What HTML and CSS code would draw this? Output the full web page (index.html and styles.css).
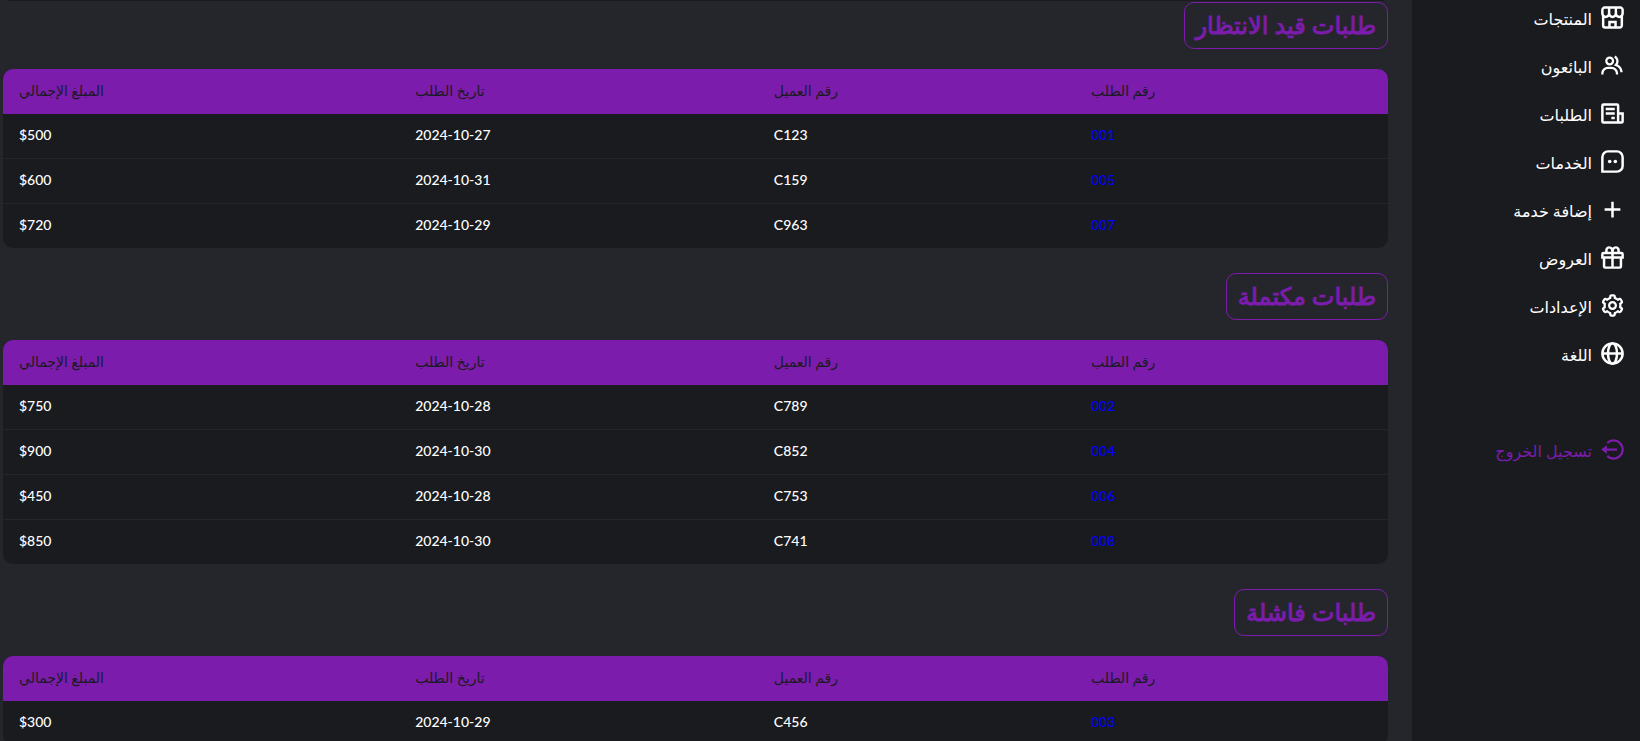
FILE: index.html
```html
<!DOCTYPE html>
<html lang="ar" dir="rtl">
<head>
<meta charset="utf-8">
<title>الطلبات</title>
<link rel="stylesheet" href="styles.css">
</head>
<body>
<div class="app">
  <nav class="sidebar">
    <a class="nav-link" href="#"><svg class="icon line" viewBox="0 0 24 24"><path d="M5 3.200h14a2 2 0 0 1 2 2v3.300a3 3 0 0 1-6 0 3 3 0 0 1-6 0 3 3 0 0 1-6 0V5.200a2 2 0 0 1 2-2zM9 3.500V9M15 3.500V9M3.700 10.500V19a1.800 1.800 0 0 0 1.800 1.800h13a1.800 1.800 0 0 0 1.800-1.800v-8.500M9.300 20.500V16h5.400v4.500"/></svg><span>المنتجات</span></a>
    <a class="nav-link" href="#"><svg class="icon" viewBox="0 0 24 24"><path d="M16.604 11.048a5.67 5.67 0 0 0 .751-3.44c-.179-1.784-1.175-3.361-2.803-4.44l-1.105 1.666c1.119.742 1.8 1.799 1.918 2.974a3.693 3.693 0 0 1-1.072 2.986l-1.192 1.192 1.618.475C18.951 13.701 19 17.957 19 18h2c0-1.789-.956-5.285-4.396-6.952z"/><path d="M9.500 12c2.206 0 4-1.794 4-4s-1.794-4-4-4-4 1.794-4 4 1.794 4 4 4zm0-6c1.103 0 2 .897 2 2s-.897 2-2 2-2-.897-2-2 .897-2 2-2zm1.500 7H8c-3.309 0-6 2.691-6 6v1h2v-1c0-2.206 1.794-4 4-4h3c2.206 0 4 1.794 4 4v1h2v-1c0-3.309-2.691-6-6-6z"/></svg><span>البائعون</span></a>
    <a class="nav-link" href="#"><svg class="icon line" viewBox="0 0 24 24"><path d="M17 20V5a1 1 0 0 0-1-1H4a1 1 0 0 0-1 1v14a1 1 0 0 0 1 1h16a1 1 0 0 0 1-1v-7h-4M6 8h8M6 12h8M11 16h3"/></svg><span>الطلبات</span></a>
    <a class="nav-link" href="#"><svg class="icon line" viewBox="0 0 24 24"><path d="M3 21V8a5 5 0 0 1 5-5h8a5 5 0 0 1 5 5v8a5 5 0 0 1-5 5z"/><circle class="dot" cx="9.500" cy="12" r="1.600"/><circle class="dot" cx="14.500" cy="12" r="1.600"/></svg><span>الخدمات</span></a>
    <a class="nav-link" href="#"><svg class="icon line" viewBox="0 0 24 24"><path d="M12 5v14M5 12h14"/></svg><span>إضافة خدمة</span></a>
    <a class="nav-link" href="#"><svg class="icon line" viewBox="0 0 24 24"><path d="M4 8h16a1 1 0 0 1 1 1v3H3V9a1 1 0 0 1 1-1zM4.500 12v8a1 1 0 0 0 1 1h13a1 1 0 0 0 1-1v-8M12 8v13M12 7.500C12 4.500 11 3 9 3S6.200 5 6.700 7.500M12 7.500c0-3 1-4.500 3-4.500s2.800 2 2.300 4.500"/></svg><span>العروض</span></a>
    <a class="nav-link" href="#"><svg class="icon" viewBox="0 0 24 24"><path d="M12 16c2.206 0 4-1.794 4-4s-1.794-4-4-4-4 1.794-4 4 1.794 4 4 4zm0-6c1.084 0 2 .916 2 2s-.916 2-2 2-2-.916-2-2 .916-2 2-2z"/><path d="m2.845 16.136 1 1.730c.531.917 1.809 1.261 2.730.730l.529-.306A8.100 8.100 0 0 0 9 19.402V20c0 1.103.897 2 2 2h2c1.103 0 2-.897 2-2v-.598a8.132 8.132 0 0 0 1.896-1.111l.529.306c.923.530 2.198.188 2.731-.731l.999-1.729a2.001 2.001 0 0 0-.731-2.732l-.505-.292a7.718 7.718 0 0 0 0-2.224l.505-.292a2.002 2.002 0 0 0 .731-2.732l-.999-1.729c-.531-.920-1.808-1.265-2.731-.732l-.529.306A8.100 8.100 0 0 0 15 4.598V4c0-1.103-.897-2-2-2h-2c-1.103 0-2 .897-2 2v.598a8.132 8.132 0 0 0-1.896 1.111l-.529-.306c-.924-.531-2.200-.187-2.731.732l-.999 1.729a2.001 2.001 0 0 0 .731 2.732l.505.292a7.683 7.683 0 0 0 0 2.223l-.505.292a2.003 2.003 0 0 0-.731 2.733zm3.326-2.758A5.703 5.703 0 0 1 6 12c0-.462.058-.926.170-1.378a.999.999 0 0 0-.470-1.108l-1.123-.650.998-1.729 1.145.662a.997.997 0 0 0 1.188-.142 6.071 6.071 0 0 1 2.384-1.399A1 1 0 0 0 11 5.300V4h2v1.300a1 1 0 0 0 .708.956 6.083 6.083 0 0 1 2.384 1.399.999.999 0 0 0 1.188.142l1.144-.661 1 1.729-1.124.649a1 1 0 0 0-.470 1.108c.112.452.170.916.170 1.378 0 .461-.058.925-.171 1.378a1 1 0 0 0 .471 1.108l1.123.649-.998 1.729-1.145-.661a.996.996 0 0 0-1.188.142 6.071 6.071 0 0 1-2.384 1.399A1 1 0 0 0 13 18.700l.002 1.300H11v-1.300a1 1 0 0 0-.708-.956 6.083 6.083 0 0 1-2.384-1.399.992.992 0 0 0-1.188-.141l-1.144.662-1-1.729 1.124-.651a1 1 0 0 0 .471-1.108z"/></svg><span>الإعدادات</span></a>
    <a class="nav-link" href="#"><svg class="icon line" viewBox="0 0 24 24"><circle cx="12" cy="12" r="9"/><ellipse cx="12" cy="12" rx="4" ry="9"/><path d="M3 12h18"/></svg><span>اللغة</span></a>
    <a class="nav-link logout" href="#"><svg class="icon" viewBox="0 0 24 24"><path d="m2 12 5 4v-3h9v-2H7V8z"/><path d="M13.001 2.999a8.938 8.938 0 0 0-6.364 2.637L8.051 7.050c1.322-1.322 3.080-2.051 4.950-2.051s3.628.729 4.950 2.051 2.051 3.080 2.051 4.950-.729 3.628-2.051 4.950-3.080 2.051-4.950 2.051-3.628-.729-4.950-2.051l-1.414 1.414c1.699 1.700 3.959 2.637 6.364 2.637s4.665-.937 6.364-2.637c1.700-1.699 2.637-3.959 2.637-6.364s-.937-4.665-2.637-6.364a8.938 8.938 0 0 0-6.364-2.637z"/></svg><span>تسجيل الخروج</span></a>
  </nav>
  <main class="content">
    <div class="divider"></div>
    <section class="orders">
      <h2 class="title">طلبات قيد الانتظار</h2>
      <table class="table">
        <thead><tr><th class="col-id">رقم الطلب</th><th class="col-client">رقم العميل</th><th class="col-date">تاريخ الطلب</th><th class="col-total">المبلغ الإجمالي</th></tr></thead>
        <tbody>
          <tr><td><a href="#">001</a></td><td>C123</td><td>2024-10-27</td><td>$500</td></tr>
          <tr><td><a href="#">005</a></td><td>C159</td><td>2024-10-31</td><td>$600</td></tr>
          <tr><td><a href="#">007</a></td><td>C963</td><td>2024-10-29</td><td>$720</td></tr>
        </tbody>
      </table>
    </section>
    <section class="orders">
      <h2 class="title">طلبات مكتملة</h2>
      <table class="table">
        <thead><tr><th class="col-id">رقم الطلب</th><th class="col-client">رقم العميل</th><th class="col-date">تاريخ الطلب</th><th class="col-total">المبلغ الإجمالي</th></tr></thead>
        <tbody>
          <tr><td><a href="#">002</a></td><td>C789</td><td>2024-10-28</td><td>$750</td></tr>
          <tr><td><a href="#">004</a></td><td>C852</td><td>2024-10-30</td><td>$900</td></tr>
          <tr><td><a href="#">006</a></td><td>C753</td><td>2024-10-28</td><td>$450</td></tr>
          <tr><td><a href="#">008</a></td><td>C741</td><td>2024-10-30</td><td>$850</td></tr>
        </tbody>
      </table>
    </section>
    <section class="orders">
      <h2 class="title">طلبات فاشلة</h2>
      <table class="table">
        <thead><tr><th class="col-id">رقم الطلب</th><th class="col-client">رقم العميل</th><th class="col-date">تاريخ الطلب</th><th class="col-total">المبلغ الإجمالي</th></tr></thead>
        <tbody>
          <tr><td><a href="#">003</a></td><td>C456</td><td>2024-10-29</td><td>$300</td></tr>
        </tbody>
      </table>
    </section>
  </main>
</div>
</body>
</html>
```
FILE: styles.css
```css
:root {
  --purple: #7b1cac;
  --dark: #191b1f;
  --page: #25262b;
}

* { box-sizing: border-box; }

body {
  margin: 0;
  background: var(--page);
  color: #fff;
  font-family: Lato, "DejaVu Sans", sans-serif;
  font-size: 14px;
}

.app {
  display: flex;
  height: 100vh;
  overflow: hidden;
}

.sidebar {
  flex: 0 0 228px;
  display: flex;
  flex-direction: column;
  gap: 16px;
  padding: 1px 14px;
  background: var(--dark);
}

.nav-link {
  display: flex;
  align-items: center;
  gap: 7px;
  height: 32px;
  color: #fff;
  font-size: 16px;
  line-height: 28px;
  text-decoration: none;
}

.nav-link span { padding-top: 4px; }

.logout {
  margin-top: 48px;
  color: var(--purple);
}

.icon {
  width: 27px;
  height: 27px;
  fill: currentColor;
}

.line {
  fill: none;
  stroke: currentColor;
  stroke-width: 2.2;
}

.dot {
  fill: currentColor;
  stroke: none;
}

.content {
  flex: 1;
  min-width: 0;
  padding: 0 24px 0 3px;
  overflow-y: auto;
  scrollbar-width: none;
}

.divider {
  height: 1px;
  margin: 0 4px 1px;
  background: var(--dark);
}

.orders { margin-bottom: 25px; }

.title {
  width: fit-content;
  height: 47px;
  margin: 0 0 20px;
  padding: 0 11px;
  border: 1px solid var(--purple);
  border-radius: 10px;
  color: var(--purple);
  font-size: 24px;
  font-weight: 500;
  line-height: 43px;
  -webkit-text-stroke: 1px var(--purple);
}

.table {
  width: 100%;
  border-spacing: 0;
  border-radius: 10px;
  background: var(--dark);
  overflow: hidden;
  table-layout: fixed;
}

.col-id { width: 22.6%; }
.col-client { width: 22.9%; }
.col-date { width: 25.9%; }
.col-total { width: 28.6%; }

.table th,
.table td {
  height: 45px;
  padding: 0 16px 2px;
  text-align: left;
  font-weight: 500;
  line-height: 20px;
}

.table th {
  background: var(--purple);
  color: var(--dark);
}

.table td {
  border-bottom: 1px solid var(--page);
  direction: ltr;
}

.table tr:last-child td {
  height: 44px;
  border-bottom: 0;
}

.table a {
  color: #00f;
  text-decoration: none;
}
```
